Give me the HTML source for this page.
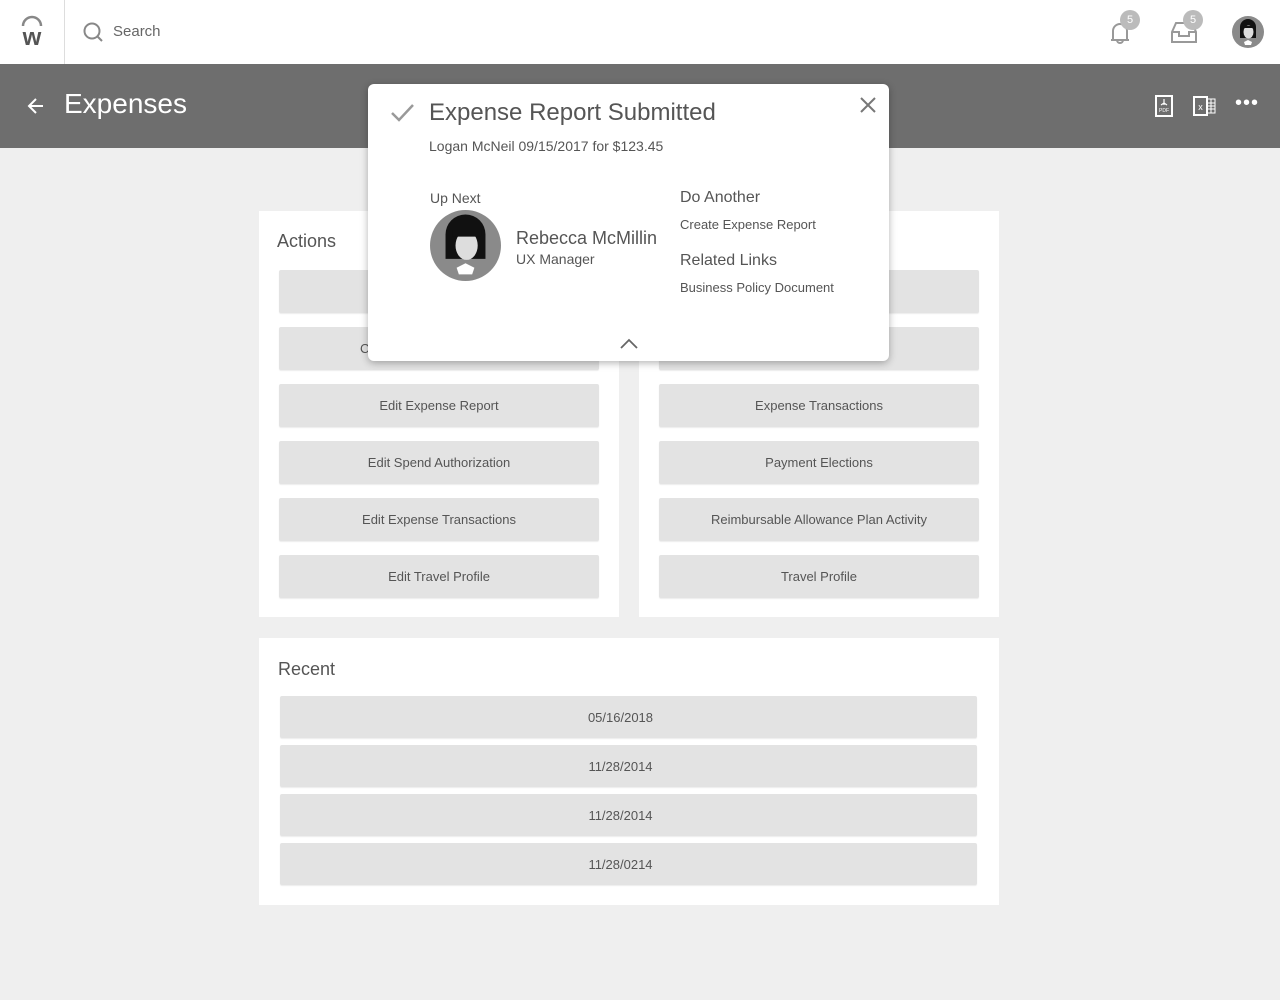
<!DOCTYPE html>
<html><head><style>
*{margin:0;padding:0;box-sizing:border-box}
body{width:1280px;height:1000px;background:#efefef;font-family:"Liberation Sans",sans-serif;position:relative;overflow:hidden;color:#555}
.a{position:absolute}
.btn{position:absolute;background:#e3e3e3;border-radius:2px;font-size:13px;color:#555;display:flex;align-items:center;justify-content:center;box-shadow:0 1px 1px rgba(0,0,0,.08)}
.card{position:absolute;background:#fff}
</style></head><body>
<div class="a" style="left:0;top:0;width:1280px;height:64px;background:#fff"></div>
<div class="a" style="left:64px;top:0;width:1px;height:64px;background:#ddd"></div>
<svg class="a" style="left:18px;top:14px" width="28" height="34" viewBox="0 0 28 34"><path d="M5 12 A9 9 0 0 1 23 12" stroke="#888" stroke-width="2.5" fill="none"/><text x="14" y="31" font-size="24" font-weight="bold" text-anchor="middle" fill="#555" font-family="Liberation Sans">w</text></svg>
<svg class="a" style="left:82px;top:21px" width="22" height="22" viewBox="0 0 22 22"><circle cx="10" cy="10" r="7.5" stroke="#888" stroke-width="2" fill="none"/><path d="M15.5 15.5L20 20" stroke="#888" stroke-width="2"/></svg>
<div class="a" style="left:113px;top:23px;font-size:15px;color:#666">Search</div>
<svg class="a" style="left:1108px;top:18px" width="26" height="28" viewBox="0 0 26 28"><path d="M5 22 V13 A7 7 0 0 1 19 13 V22 Z M3 22 H21 M9 22 A3 3 0 0 0 15 22" stroke="#999" stroke-width="2" fill="none"/></svg>
<div class="a" style="left:1120px;top:10px;width:20px;height:20px;border-radius:50%;background:#bbb;color:#fff;font-size:11px;text-align:center;line-height:20px">5</div>
<svg class="a" style="left:1170px;top:20px" width="28" height="24" viewBox="0 0 28 24"><path d="M2 12 L6 3 H22 L26 12 V22 H2 Z M2 12 H9 V16 H19 V12 H26" stroke="#999" stroke-width="2" fill="none"/></svg>
<div class="a" style="left:1183px;top:10px;width:20px;height:20px;border-radius:50%;background:#bbb;color:#fff;font-size:11px;text-align:center;line-height:20px">5</div>
<svg class="a" style="left:1232px;top:16px" width="32" height="32" viewBox="0 0 32 32"><circle cx="16" cy="16" r="16" fill="#8a8a8a"/><path d="M8 22 V11 A8 8 0 0 1 24 11 V22 Z" fill="#111"/><ellipse cx="16.5" cy="16" rx="5" ry="6.5" fill="#ddd"/><path d="M11 12 H22 V10 H11Z" fill="#111"/><path d="M12 26 L16 24 L20 26 L19 29 L13 29Z" fill="#fff"/></svg>
<div class="a" style="left:0;top:64px;width:1280px;height:84px;background:#6e6e6e"></div>
<svg class="a" style="left:26px;top:96px" width="20" height="20" viewBox="0 0 20 20"><path d="M17 10H4 M10 3L3 10L10 17" stroke="#fff" stroke-width="2" fill="none"/></svg>
<div class="a" style="left:64px;top:88px;font-size:28px;color:#fff">Expenses</div>
<svg class="a" style="left:1155px;top:95px" width="18" height="22" viewBox="0 0 18 22"><rect x="1" y="1" width="16" height="20" stroke="#fff" stroke-width="2" fill="none"/><text x="9" y="17" font-size="5" fill="#fff" text-anchor="middle">PDF</text><path d="M9 4 V10 M6 10 L9 8 L12 10" stroke="#fff" stroke-width="1.2" fill="none"/></svg>
<svg class="a" style="left:1193px;top:95px" width="24" height="22" viewBox="0 0 24 22"><rect x="1" y="2" width="13" height="18" stroke="#fff" stroke-width="2" fill="none"/><text x="7.5" y="15" font-size="9" fill="#fff" text-anchor="middle">x</text><path d="M14 4H22V18H14 M18 4V18 M14 8H22 M14 11H22 M14 14H22" stroke="#fff" stroke-width="1" fill="none"/></svg>
<div class="a" style="left:1235px;top:92px;font-size:20px;color:#fff;letter-spacing:1px">•••</div>

<div class="card" style="left:259px;top:211px;width:360px;height:406px"></div>
<div class="a" style="left:277px;top:231px;font-size:18px;color:#555">Actions</div>
<div class="card" style="left:639px;top:211px;width:360px;height:406px"></div>
<div class="btn" style="left:279px;top:270px;width:320px;height:43px"></div>
<div class="btn" style="left:279px;top:327px;width:320px;height:43px;justify-content:flex-start;padding-left:81px">C</div>
<div class="btn" style="left:279px;top:384px;width:320px;height:43px">Edit Expense Report</div>
<div class="btn" style="left:279px;top:441px;width:320px;height:43px">Edit Spend Authorization</div>
<div class="btn" style="left:279px;top:498px;width:320px;height:43px">Edit Expense Transactions</div>
<div class="btn" style="left:279px;top:555px;width:320px;height:43px">Edit Travel Profile</div>
<div class="btn" style="left:659px;top:270px;width:320px;height:43px"></div>
<div class="btn" style="left:659px;top:327px;width:320px;height:43px"></div>
<div class="btn" style="left:659px;top:384px;width:320px;height:43px">Expense Transactions</div>
<div class="btn" style="left:659px;top:441px;width:320px;height:43px">Payment Elections</div>
<div class="btn" style="left:659px;top:498px;width:320px;height:43px">Reimbursable Allowance Plan Activity</div>
<div class="btn" style="left:659px;top:555px;width:320px;height:43px">Travel Profile</div>

<div class="card" style="left:259px;top:638px;width:740px;height:267px"></div>
<div class="a" style="left:278px;top:659px;font-size:18px;color:#555">Recent</div>
<div class="btn" style="left:280px;top:696px;width:697px;height:42px;padding-right:16px">05/16/2018</div>
<div class="btn" style="left:280px;top:745px;width:697px;height:42px;padding-right:16px">11/28/2014</div>
<div class="btn" style="left:280px;top:794px;width:697px;height:42px;padding-right:16px">11/28/2014</div>
<div class="btn" style="left:280px;top:843px;width:697px;height:42px;padding-right:16px">11/28/0214</div>

<div class="a" style="left:368px;top:84px;width:521px;height:277px;background:#fff;border-radius:6px;box-shadow:0 2px 8px rgba(0,0,0,.3)"></div>
<svg class="a" style="left:390px;top:102px" width="26" height="22" viewBox="0 0 26 22"><path d="M2 11 L9 18 L23 3" stroke="#999" stroke-width="2.5" fill="none"/></svg>
<div class="a" style="left:429px;top:99px;font-size:24px;color:#555">Expense Report Submitted</div>
<svg class="a" style="left:859px;top:96px" width="18" height="18" viewBox="0 0 18 18"><path d="M2 2L16 16M16 2L2 16" stroke="#777" stroke-width="2"/></svg>
<div class="a" style="left:429px;top:138px;font-size:14px;color:#555">Logan McNeil 09/15/2017 for $123.45</div>
<div class="a" style="left:430px;top:190px;font-size:14px;color:#555">Up Next</div>
<svg class="a" style="left:430px;top:210px" width="71" height="71" viewBox="0 0 32 32"><circle cx="16" cy="16" r="16" fill="#8a8a8a"/><path d="M7 22 V11 A8.5 8.5 0 0 1 25 11 V22 Z" fill="#111"/><ellipse cx="16.5" cy="16" rx="5" ry="6.5" fill="#ddd"/><path d="M10 12 H23 V9 H10Z" fill="#111"/><path d="M12 26 L16 24 L20 26 L19 29 L13 29Z" fill="#fff"/></svg>
<div class="a" style="left:516px;top:228px;font-size:18px;color:#555">Rebecca McMillin</div>
<div class="a" style="left:516px;top:251px;font-size:14px;color:#555">UX Manager</div>
<div class="a" style="left:680px;top:189px;font-size:16px;color:#555">Do Another</div>
<div class="a" style="left:680px;top:217px;font-size:13px;color:#555">Create Expense Report</div>
<div class="a" style="left:680px;top:252px;font-size:16px;color:#555">Related Links</div>
<div class="a" style="left:680px;top:280px;font-size:13px;color:#555">Business Policy Document</div>
<svg class="a" style="left:619px;top:338px" width="20" height="12" viewBox="0 0 20 12"><path d="M2 10L10 2L18 10" stroke="#666" stroke-width="1.8" fill="none"/></svg>
</body></html>
